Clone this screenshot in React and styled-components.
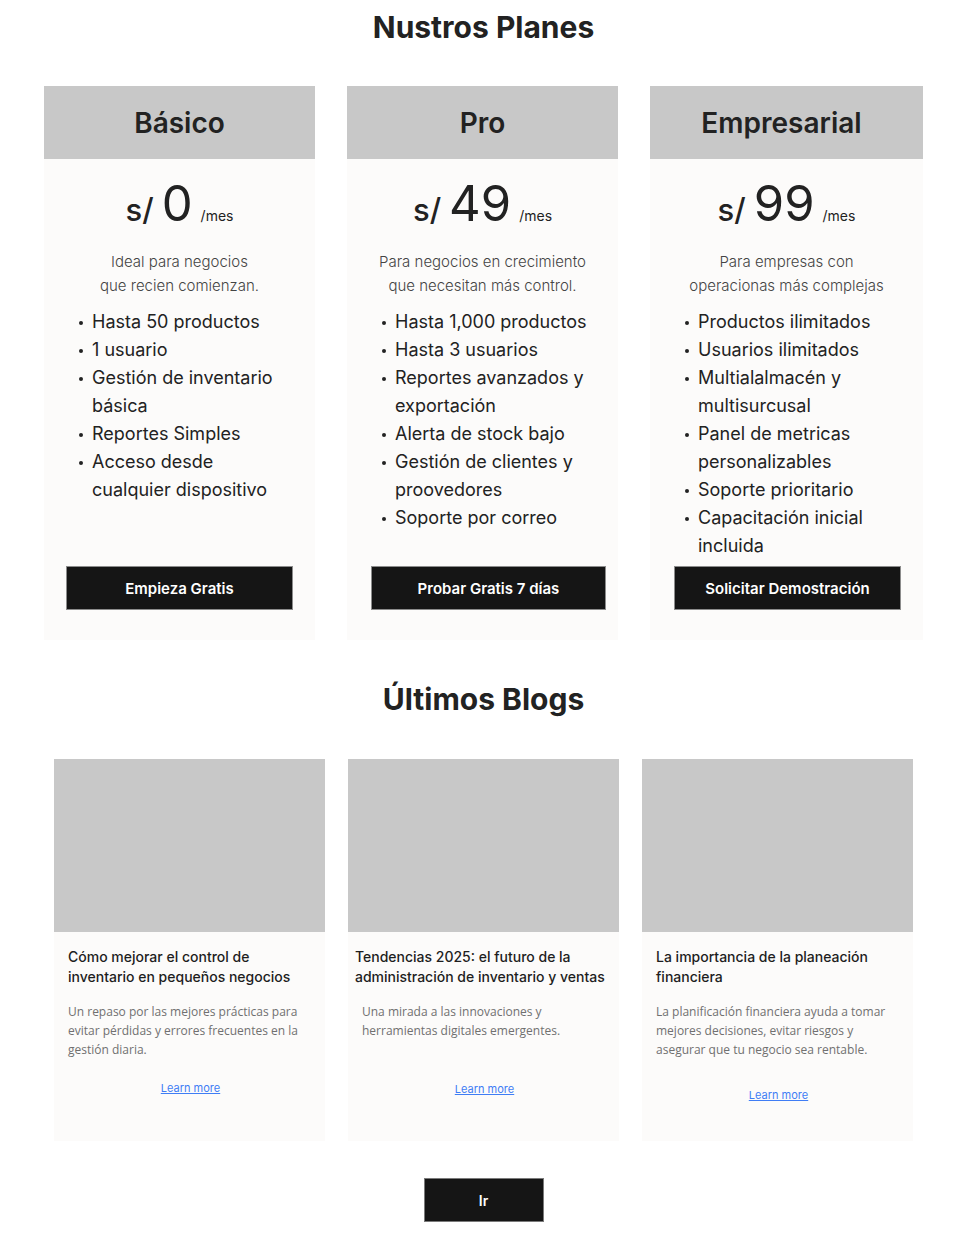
import React from 'react'
import styled, { createGlobalStyle } from 'styled-components'

const plans = [
	{
		name: 'Básico',
		price: '0',
		desc: ['Ideal para negocios', 'que recien comienzan.'],
		items: [
			'Hasta 50 productos',
			'1 usuario',
			'Gestión de inventario básica',
			'Reportes Simples',
			'Acceso desde cualquier dispositivo',
		],
		cta: 'Empieza Gratis',
		btnWidth: 227,
		btnShift: 0,
		headShift: 0,
	},
	{
		name: 'Pro',
		price: '49',
		desc: ['Para negocios en crecimiento', 'que necesitan más control.'],
		items: [
			'Hasta 1,000 productos',
			'Hasta 3 usuarios',
			'Reportes avanzados y exportación',
			'Alerta de stock bajo',
			'Gestión de clientes y proovedores',
			'Soporte por correo',
		],
		cta: 'Probar Gratis 7 días',
		btnWidth: 235,
		btnShift: 12,
		headShift: 0,
	},
	{
		name: 'Empresarial',
		price: '99',
		desc: ['Para empresas con', 'operacionas más complejas'],
		items: [
			'Productos ilimitados',
			'Usuarios ilimitados',
			'Multialalmacén y multisurcusal',
			'Panel de metricas personalizables',
			'Soporte prioritario',
			'Capacitación inicial incluida',
		],
		cta: 'Solicitar Demostración',
		btnWidth: 227,
		btnShift: 2,
		headShift: 10,
	},
]

const blogs = [
	{
		title: 'Cómo mejorar el control de inventario en pequeños negocios',
		text: 'Un repaso por las mejores prácticas para evitar pérdidas y errores frecuentes en la gestión diaria.',
		shift: 0,
		linkGap: 22,
	},
	{
		title: 'Tendencias 2025: el futuro de la administración de inventario y ventas',
		text: 'Una mirada a las innovaciones y herramientas digitales emergentes.',
		shift: 7,
		linkGap: 23,
	},
	{
		title: 'La importancia de la planeación financiera',
		text: 'La planificación financiera ayuda a tomar mejores decisiones, evitar riesgos y asegurar que tu negocio sea rentable.',
		shift: 0,
		linkGap: 29,
	},
]

export default function App() {
	return (
		<>
			<GlobalStyle />
			<Page>
				<SectionTitle>Nustros Planes</SectionTitle>
				<PlansGrid>
					{plans.map((p) => (
						<PlanCard key={p.name}>
							<PlanHeader $shift={p.headShift}>{p.name}</PlanHeader>
							<PriceRow>
								<Currency>s/</Currency>
								<Amount>{p.price}</Amount>
								<Period>/mes</Period>
							</PriceRow>
							<PlanDesc>
								{p.desc[0]}
								<br />
								{p.desc[1]}
							</PlanDesc>
							<FeatureList>
								{p.items.map((it) => (
									<li key={it}>{it}</li>
								))}
							</FeatureList>
							<PlanButton $width={p.btnWidth} $shift={p.btnShift}>
								{p.cta}
							</PlanButton>
						</PlanCard>
					))}
				</PlansGrid>

				<BlogTitle>Últimos Blogs</BlogTitle>
				<BlogGrid>
					{blogs.map((b) => (
						<BlogCard key={b.title}>
							<BlogImage />
							<BlogBody>
								<BlogHeading $shift={b.shift}>{b.title}</BlogHeading>
								<BlogText>{b.text}</BlogText>
								<LearnMore href="#" $gap={b.linkGap}>
									Learn more
								</LearnMore>
							</BlogBody>
						</BlogCard>
					))}
				</BlogGrid>
				<Footer>
					<GoButton>Ir</GoButton>
				</Footer>
			</Page>
		</>
	)
}

const GlobalStyle = createGlobalStyle`
	body {
		margin: 0;
		background: #fff;
		font-family: Inter, 'Noto Sans', sans-serif;
		color: #222;
	}
`

const Page = styled.div`
	width: 967px;
	padding: 8px 0 20px;
`

const SectionTitle = styled.h1`
	margin: 0;
	text-align: center;
	font-size: 30px;
	line-height: 38px;
	font-weight: 700;
	color: #222;
`

const PlansGrid = styled.div`
	display: grid;
	grid-template-columns: 271px 271px 273px;
	column-gap: 32px;
	padding-left: 44px;
	margin-top: 40px;
`

const PlanCard = styled.div`
	display: flex;
	flex-direction: column;
	align-items: center;
	background: #fcfbfa;
	height: 554px;
	padding-bottom: 30px;
	box-sizing: border-box;
`

const PlanHeader = styled.div`
	align-self: stretch;
	height: 73px;
	display: flex;
	align-items: center;
	justify-content: center;
	padding-right: ${(p) => p.$shift}px;
	background: #c8c8c8;
	font-size: 28px;
	font-weight: 600;
	color: #222;
`

const PriceRow = styled.div`
	display: flex;
	align-items: baseline;
	justify-content: center;
	gap: 8px;
	margin-top: 17px;
	height: 56px;
	line-height: 56px;
	color: #222;
`

const Currency = styled.span`
	font-size: 31px;
	font-weight: 500;
`

const Amount = styled.span`
	font-size: 49px;
	font-weight: 400;
`

const Period = styled.span`
	font-size: 14px;
	font-weight: 400;
`

const PlanDesc = styled.p`
	margin: 18px 0 0;
	font-size: 15px;
	line-height: 24px;
	font-weight: 300;
	color: #444;
	text-align: center;
`

const FeatureList = styled.ul`
	align-self: stretch;
	list-style: none;
	margin: 10px 0 0;
	padding: 0 18px 0 48px;
	font-size: 18px;
	line-height: 28px;
	color: #222;

	li {
		position: relative;
	}

	li::before {
		content: '';
		position: absolute;
		left: -13px;
		top: 13px;
		width: 4px;
		height: 4px;
		border-radius: 50%;
		background: #222;
	}
`

const PlanButton = styled.button`
	margin-top: auto;
	margin-left: ${(p) => p.$shift}px;
	width: ${(p) => p.$width}px;
	height: 44px;
	background: #151515;
	border: 1px solid #8c8c8c;
	color: #fff;
	font-family: Inter, 'Noto Sans', sans-serif;
	font-size: 15px;
	font-weight: 600;
	cursor: pointer;
`

const BlogTitle = styled(SectionTitle)`
	margin-top: 40px;
`

const BlogGrid = styled.div`
	display: grid;
	grid-template-columns: repeat(3, 271px);
	column-gap: 23px;
	padding-left: 54px;
	margin-top: 41px;
`

const BlogCard = styled.div`
	display: flex;
	flex-direction: column;
	background: #fcfbfa;
	height: 382px;
`

const BlogImage = styled.div`
	height: 173px;
	background: #c8c8c8;
`

const BlogBody = styled.div`
	display: flex;
	flex-direction: column;
	padding: 15px 12px 0 14px;
`

const BlogHeading = styled.h3`
	margin: 0 0 0 -${(p) => p.$shift}px;
	font-size: 14px;
	line-height: 20px;
	font-weight: 500;
	color: #1e1e1e;
`

const BlogText = styled.p`
	margin: 15px 0 0;
	min-height: 57px;
	font-family: 'Open Sans', sans-serif;
	font-size: 12px;
	line-height: 19px;
	color: #707070;
`

const LearnMore = styled.a`
	align-self: center;
	margin-top: ${(p) => p.$gap}px;
	font-size: 11px;
	color: #3f7df5;
	text-decoration: underline;
`

const Footer = styled.div`
	display: flex;
	justify-content: center;
	margin-top: 37px;
`

const GoButton = styled.button`
	width: 120px;
	height: 44px;
	background: #151515;
	border: 1px solid #7a7a7a;
	color: #fff;
	font-family: Inter, 'Noto Sans', sans-serif;
	font-size: 14px;
	font-weight: 600;
	cursor: pointer;
`
